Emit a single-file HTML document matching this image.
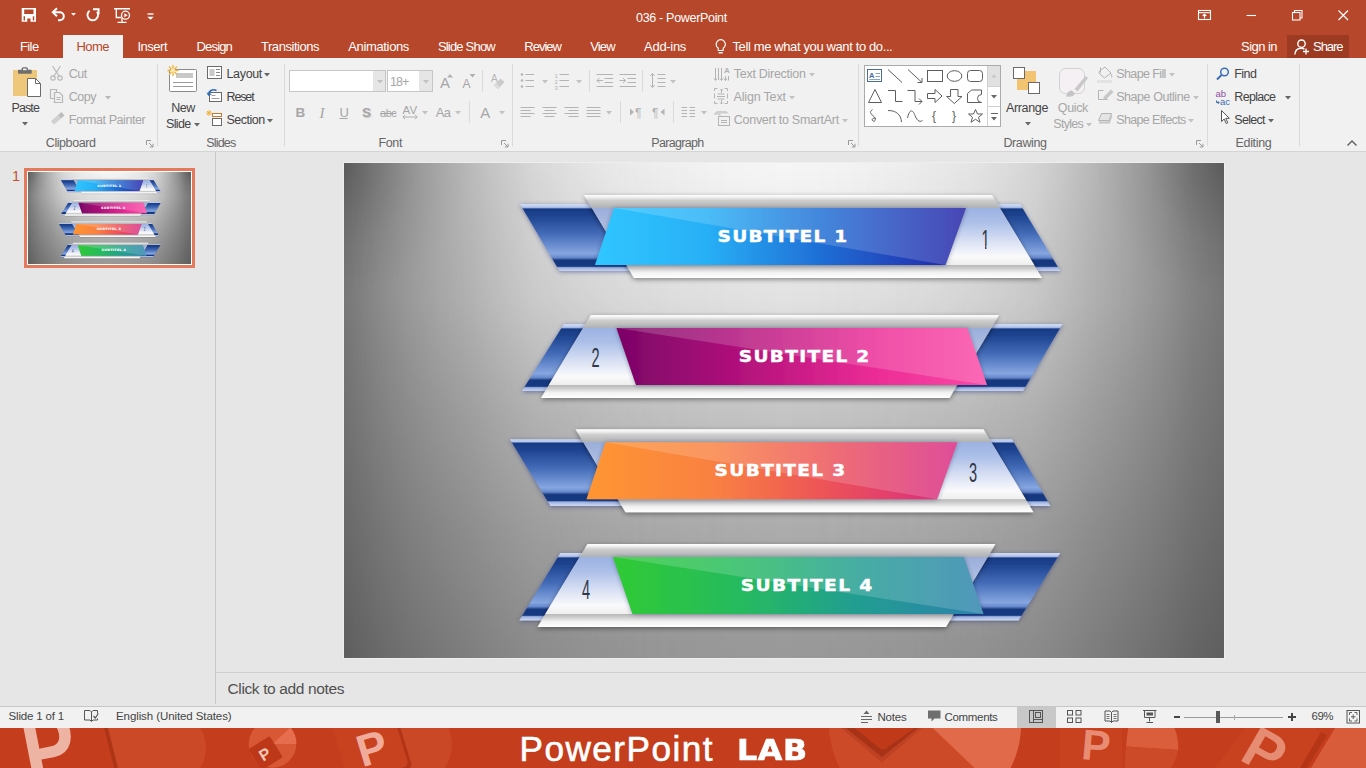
<!DOCTYPE html>
<html lang="en"><head><meta charset="utf-8"><title>036 - PowerPoint</title>
<style>

html,body{margin:0;padding:0;}
body{width:1366px;height:768px;overflow:hidden;background:#E6E6E6;font-family:"Liberation Sans",sans-serif;}
#app{position:relative;width:1366px;height:768px;overflow:hidden;}
.t{position:absolute;white-space:nowrap;line-height:1;display:block;}
.a{position:absolute;display:block;}
svg{position:absolute;overflow:visible;}

</style></head>
<body>
<div id="app">
<div class="a" style="left:0;top:0;width:1366px;height:58px;background:#B7472A"></div>
<div class="a" style="left:0;top:58px;width:1366px;height:93px;background:#F1F1F1"></div>
<div class="a" style="left:0;top:151px;width:1366px;height:1px;background:#D4D4D4"></div>
<div class="a" style="left:63px;top:35px;width:60px;height:24px;background:#F1F1F1"></div>
<div class="a" style="left:1287px;top:35px;width:62px;height:23px;background:#9C3A22"></div>
<span class="t" style="left:636.0px;top:11.7px;font-size:12.5px;color:#fff;letter-spacing:-0.31px;">036 - PowerPoint</span>
<span class="t" style="left:20.0px;top:40.0px;font-size:13px;color:#fff;letter-spacing:-0.61px;">File</span>
<span class="t" style="left:137.5px;top:40.0px;font-size:13px;color:#fff;letter-spacing:-0.50px;">Insert</span>
<span class="t" style="left:196.5px;top:40.0px;font-size:13px;color:#fff;letter-spacing:-0.83px;">Design</span>
<span class="t" style="left:261.0px;top:40.0px;font-size:13px;color:#fff;letter-spacing:-0.46px;">Transitions</span>
<span class="t" style="left:348.3px;top:40.0px;font-size:13px;color:#fff;letter-spacing:-0.36px;">Animations</span>
<span class="t" style="left:437.9px;top:40.0px;font-size:13px;color:#fff;letter-spacing:-0.80px;">Slide Show</span>
<span class="t" style="left:524.3px;top:40.0px;font-size:13px;color:#fff;letter-spacing:-0.99px;">Review</span>
<span class="t" style="left:590.2px;top:40.0px;font-size:13px;color:#fff;letter-spacing:-0.84px;">View</span>
<span class="t" style="left:644.1px;top:40.0px;font-size:13px;color:#fff;letter-spacing:-0.30px;">Add-ins</span>
<span class="t" style="left:732.5px;top:40.0px;font-size:13px;color:#fff;letter-spacing:-0.38px;">Tell me what you want to do...</span>
<span class="t" style="left:1241.0px;top:40.0px;font-size:13px;color:#fff;letter-spacing:-0.54px;">Sign in</span>
<span class="t" style="left:1313.0px;top:40.0px;font-size:13px;color:#fff;letter-spacing:-1.04px;">Share</span>
<span class="t" style="left:76.5px;top:40.0px;font-size:13px;color:#B7472A;letter-spacing:-0.54px;">Home</span>
<svg class="a" style="left:0;top:0" width="180" height="32" viewBox="0 0 180 32" fill="none" stroke="#fff" stroke-width="1.400">
<path fill-rule="evenodd" fill="#fff" stroke="none" d="M21.700 8H36V21.800H21.700ZM24.200 9.600H33.500V14.100H24.200ZM23.600 16.300H25V20.400H23.600ZM32.800 16.300H34.200V20.400H32.800ZM27.300 18.400H30.500V21.800H27.300Z"/>
<path d="M53.500 12.300h6.300a4 4 0 0 1 0 8h-1.800" stroke-width="2"/><path d="M57 8.300l-4.200 4 4.200 4" stroke-width="2"/>
<path d="M71 13l2.500 2.800 2.500-2.800z" fill="#fff" stroke="none"/>
<path d="M89.600 10.700a5.300 5.300 0 1 0 7.400 1.100" stroke-width="1.900"/><path d="M93 9.200h5.600v5.300" stroke-width="1.900"/>
<path d="M114 8.700h16M116.300 9v8.500h5" stroke-width="1.400"/><circle cx="125.500" cy="15.200" r="4" stroke-width="1.300"/><path d="M124.300 13.200v4l3.300-2z" fill="#fff" stroke="none"/><path d="M117.500 22.300h9M122 18v4.300" stroke-width="1.300"/>
<path d="M147.500 14h6" stroke-width="1.400"/><path d="M147.300 16.800l3.200 3 3.200-3z" fill="#fff" stroke="none"/>
</svg>
<svg class="a" style="left:712px;top:36px" width="18" height="20" viewBox="0 0 18 20" fill="none" stroke="#fff" stroke-width="1.200">
<path d="M6.300 14.500v-2.300a4.600 4.600 0 1 1 4.900 0v2.300z"/><path d="M6.600 16.800h4.300" stroke-width="1.300"/></svg>
<svg class="a" style="left:1292px;top:37px" width="20" height="20" viewBox="0 0 20 20" fill="none" stroke="#fff" stroke-width="1.400">
<circle cx="9.500" cy="6.700" r="3.700"/><path d="M2.800 17.500c.3-4 3-6.300 6.300-6.300 1.300 0 2.400.3 3.300.9"/><path d="M14 11.500v6M11 14.500h6" stroke-width="1.300"/></svg>
<svg class="a" style="left:1190px;top:5px" width="170" height="22" viewBox="0 0 170 22" fill="none" stroke="#fff" stroke-width="1.100">
<rect x="8.500" y="5.500" width="12" height="9"/><path d="M8.500 7.700h12" /><path d="M14.500 13.500v-4M12.700 11l1.800-1.800 1.800 1.800"/>
<path d="M56.500 10.500h9.500"/>
<rect x="102.500" y="7.500" width="7.500" height="7.500"/><path d="M104.500 7.500v-2h7.500v7.500h-2"/>
<path d="M148.500 5.500l9.500 9.500M158 5.500l-9.500 9.500" stroke-width="1.200"/>
</svg>
<div class="a" style="left:157px;top:64px;width:1px;height:82px;background:#DADADA"></div>
<div class="a" style="left:284px;top:64px;width:1px;height:82px;background:#DADADA"></div>
<div class="a" style="left:512px;top:64px;width:1px;height:82px;background:#DADADA"></div>
<div class="a" style="left:858px;top:64px;width:1px;height:82px;background:#DADADA"></div>
<div class="a" style="left:1207px;top:64px;width:1px;height:82px;background:#DADADA"></div>
<div class="a" style="left:1299px;top:64px;width:1px;height:82px;background:#DADADA"></div>
<span class="t" style="left:11.5px;top:102.2px;font-size:12.5px;color:#444;letter-spacing:-0.89px;">Paste</span>
<svg class="a" style="left:21.5px;top:122.0px" width="6" height="3.500" viewBox="0 0 6 3.500"><path d="M0 0h6l-3 3.500z" fill="#666"/></svg>
<span class="t" style="left:68.7px;top:67.7px;font-size:12.5px;color:#A6A6A6;letter-spacing:-0.48px;">Cut</span>
<span class="t" style="left:68.7px;top:91.2px;font-size:12.5px;color:#A6A6A6;letter-spacing:-0.47px;">Copy</span>
<svg class="a" style="left:105px;top:95.5px" width="6" height="3.500" viewBox="0 0 6 3.500"><path d="M0 0h6l-3 3.500z" fill="#B8B8B8"/></svg>
<span class="t" style="left:68.7px;top:114.2px;font-size:12.5px;color:#A6A6A6;letter-spacing:-0.44px;">Format Painter</span>
<span class="t" style="left:45.8px;top:137.2px;font-size:12.5px;color:#666;letter-spacing:-0.43px;">Clipboard</span>
<svg class="a" style="left:146.0px;top:140.0px" width="8" height="8" viewBox="0 0 8 8" fill="none" stroke="#999" stroke-width="1"><path d="M0.500 5v-4.500h4.500"/><path d="M3 3l4 4M7 3.800v3.200h-3.200"/></svg>
<span class="t" style="left:171.3px;top:102.2px;font-size:12.5px;color:#444;letter-spacing:-0.50px;">New</span>
<span class="t" style="left:166.0px;top:117.7px;font-size:12.5px;color:#444;letter-spacing:-0.64px;">Slide</span>
<svg class="a" style="left:193.5px;top:122.5px" width="6" height="3.500" viewBox="0 0 6 3.500"><path d="M0 0h6l-3 3.500z" fill="#666"/></svg>
<span class="t" style="left:226.5px;top:68.2px;font-size:12.5px;color:#444;letter-spacing:-0.34px;">Layout</span>
<svg class="a" style="left:264.3px;top:72.5px" width="6" height="3.500" viewBox="0 0 6 3.500"><path d="M0 0h6l-3 3.500z" fill="#666"/></svg>
<span class="t" style="left:226.5px;top:91.2px;font-size:12.5px;color:#444;letter-spacing:-1.13px;">Reset</span>
<span class="t" style="left:226.5px;top:114.2px;font-size:12.5px;color:#444;letter-spacing:-0.50px;">Section</span>
<svg class="a" style="left:267.2px;top:118.5px" width="6" height="3.500" viewBox="0 0 6 3.500"><path d="M0 0h6l-3 3.500z" fill="#666"/></svg>
<span class="t" style="left:206.2px;top:137.2px;font-size:12.5px;color:#666;letter-spacing:-0.81px;">Slides</span>
<div class="a" style="left:289px;top:70px;width:97px;height:22px;background:#fff;border:1px solid #C6C6C6;box-sizing:border-box"></div>
<div class="a" style="left:373px;top:71px;width:12px;height:20px;background:#E6E6E6"></div>
<div class="a" style="left:387px;top:70px;width:46px;height:22px;background:#fff;border:1px solid #C6C6C6;box-sizing:border-box"></div>
<div class="a" style="left:419px;top:71px;width:13px;height:20px;background:#E6E6E6"></div>
<svg class="a" style="left:376.5px;top:80.0px" width="6" height="3.500" viewBox="0 0 6 3.500"><path d="M0 0h6l-3 3.500z" fill="#C2C2C2"/></svg>
<svg class="a" style="left:422.5px;top:80.0px" width="6" height="3.500" viewBox="0 0 6 3.500"><path d="M0 0h6l-3 3.500z" fill="#C2C2C2"/></svg>
<span class="t" style="left:390.0px;top:76.2px;font-size:12.5px;color:#A6A6A6;letter-spacing:-0.90px;">18+</span>
<span class="t" style="left:440.0px;top:75.1px;font-size:15px;color:#A6A6A6;letter-spacing:-0.01px;">A</span>
<span class="t" style="left:462.5px;top:77.6px;font-size:12px;color:#A6A6A6;letter-spacing:-0.00px;">A</span>
<svg class="a" style="left:447px;top:73px" width="30" height="6" viewBox="0 0 30 6"><path d="M0 4.500l3-3.500 3 3.500zM22.500 1h6l-3 3.500z" fill="#B0B0B0"/></svg>
<div class="a" style="left:482px;top:70px;width:1px;height:22px;background:#DADADA"></div>
<svg class="a" style="left:489px;top:72px" width="18" height="18" viewBox="0 0 18 18"><text x="2" y="10" font-size="10" fill="#B5B5B5" font-family="Liberation Sans, sans-serif">A</text><path d="M5 13.500l6.500-7 4 3.500-6.500 7z" fill="#C9C9C9"/><path d="M5 13.500l2-2.200 4 3.500-2 2.200z" fill="#DCDCDC"/></svg>
<span class="t" style="left:295.4px;top:106.4px;font-size:13.5px;color:#A6A6A6;letter-spacing:-1.75px;font-weight:bold;">B</span>
<span class="t" style="left:319.5px;top:106.4px;font-size:13.5px;color:#A6A6A6;letter-spacing:0.75px;font-style:italic;font-family:'Liberation Serif',serif;font-size:15px;">I</span>
<span class="t" style="left:339.5px;top:106.3px;font-size:13px;color:#A6A6A6;letter-spacing:-1.19px;text-decoration:underline;">U</span>
<span class="t" style="left:362.0px;top:106.4px;font-size:13.5px;color:#A6A6A6;letter-spacing:-1.00px;font-weight:bold;text-shadow:1px 1px 1px #ccc;">S</span>
<span class="t" style="left:380.0px;top:107.5px;font-size:11px;color:#A6A6A6;letter-spacing:-0.45px;text-decoration:line-through;">abc</span>
<span class="t" style="left:402.4px;top:104.6px;font-size:11.5px;color:#A6A6A6;letter-spacing:0.26px;">AV</span>
<svg class="a" style="left:402px;top:114px" width="16" height="6" viewBox="0 0 16 6" fill="none" stroke="#AEAEAE" stroke-width="1"><path d="M1 3h14M3 0.800l-2.200 2.200 2.200 2.200M13 0.800l2.200 2.200-2.200 2.200"/></svg>
<svg class="a" style="left:421.5px;top:110.5px" width="6" height="3.500" viewBox="0 0 6 3.500"><path d="M0 0h6l-3 3.500z" fill="#C2C2C2"/></svg>
<span class="t" style="left:435.8px;top:106.3px;font-size:13px;color:#A6A6A6;letter-spacing:-0.70px;">Aa</span>
<svg class="a" style="left:454.5px;top:110.5px" width="6" height="3.500" viewBox="0 0 6 3.500"><path d="M0 0h6l-3 3.500z" fill="#C2C2C2"/></svg>
<div class="a" style="left:469px;top:101px;width:1px;height:22px;background:#DADADA"></div>
<span class="t" style="left:480.3px;top:105.1px;font-size:15px;color:#A6A6A6;letter-spacing:-0.01px;">A</span>
<svg class="a" style="left:498.5px;top:110.5px" width="6" height="3.500" viewBox="0 0 6 3.500"><path d="M0 0h6l-3 3.500z" fill="#C2C2C2"/></svg>
<span class="t" style="left:378.4px;top:137.2px;font-size:12.5px;color:#666;letter-spacing:-0.35px;">Font</span>
<svg class="a" style="left:501.0px;top:140.0px" width="8" height="8" viewBox="0 0 8 8" fill="none" stroke="#999" stroke-width="1"><path d="M0.500 5v-4.500h4.500"/><path d="M3 3l4 4M7 3.800v3.200h-3.200"/></svg>
<svg class="a" style="left:516px;top:66px" width="200" height="60" viewBox="516 66 200 60" fill="none" stroke="#B4B4B4" stroke-width="1">
<g fill="#B4B4B4" stroke="none"><circle cx="522" cy="74.500" r="1.300"/><circle cx="522" cy="80.500" r="1.300"/><circle cx="522" cy="86.500" r="1.300"/></g>
<path d="M525.500 74.500h8.500M525.500 80.500h8.500M525.500 86.500h8.500"/>
<path d="M559.500 74.500h9.500M559.500 80.500h9.500M559.500 86.500h9.500"/>
<path d="M596.500 74.500h16.500M604.500 78.500h8.500M604.500 82.500h8.500M596.500 86.500h16.500M597 80.500h6M599.500 78l-2.500 2.500 2.500 2.500"/>
<path d="M619.500 74.500h16.500M627.500 78.500h8.500M627.500 82.500h8.500M619.500 86.500h16.500M619.500 80.500h6M623 78l2.500 2.500-2.500 2.500"/>
<path d="M657.500 74.500h8M657.500 78.500h8M657.500 82.500h8M657.500 86.500h8M652.500 73.500v14M650.300 76l2.200-2.500 2.200 2.500M650.300 85l2.200 2.500 2.200-2.500"/>
<path d="M520.500 107.500h14M520.500 110.500h10M520.500 113.500h14M520.500 116.500h10"/>
<path d="M542.500 107.500h14M544.500 110.500h10M542.500 113.500h14M544.500 116.500h10"/>
<path d="M564.500 107.500h14M568.500 110.500h10M564.500 113.500h14M568.500 116.500h10"/>
<path d="M586.500 107.500h14M586.500 110.500h14M586.500 113.500h14M586.500 116.500h14"/>
<path d="M681.500 107.500h5.500M689.500 107.500h5.500M681.500 110.500h5.500M689.500 110.500h5.500M681.500 113.500h5.500M689.500 113.500h5.500M681.500 116.500h5.500M689.500 116.500h5.500"/>
<g fill="#B4B4B4" stroke="none"><path d="M630 108.500l4 3.500-4 3.500z"/><path d="M664.500 108.500l-4 3.500 4 3.500z"/></g>
</svg>
<span class="t" style="left:554.5px;top:72.7px;font-size:6px;color:#B4B4B4;letter-spacing:0.00px;">1</span>
<span class="t" style="left:554.5px;top:78.7px;font-size:6px;color:#B4B4B4;letter-spacing:0.00px;">2</span>
<span class="t" style="left:554.5px;top:84.7px;font-size:6px;color:#B4B4B4;letter-spacing:0.00px;">3</span>
<span class="t" style="left:635.0px;top:107.1px;font-size:12px;color:#B4B4B4;letter-spacing:0.00px;">¶</span>
<span class="t" style="left:652.0px;top:107.1px;font-size:12px;color:#B4B4B4;letter-spacing:0.00px;">¶</span>
<svg class="a" style="left:541.5px;top:80.0px" width="6" height="3.500" viewBox="0 0 6 3.500"><path d="M0 0h6l-3 3.500z" fill="#C2C2C2"/></svg>
<svg class="a" style="left:575.5px;top:80.0px" width="6" height="3.500" viewBox="0 0 6 3.500"><path d="M0 0h6l-3 3.500z" fill="#C2C2C2"/></svg>
<svg class="a" style="left:669.5px;top:80.0px" width="6" height="3.500" viewBox="0 0 6 3.500"><path d="M0 0h6l-3 3.500z" fill="#C2C2C2"/></svg>
<svg class="a" style="left:605.5px;top:110.5px" width="6" height="3.500" viewBox="0 0 6 3.500"><path d="M0 0h6l-3 3.500z" fill="#C2C2C2"/></svg>
<svg class="a" style="left:700.5px;top:110.5px" width="6" height="3.500" viewBox="0 0 6 3.500"><path d="M0 0h6l-3 3.500z" fill="#C2C2C2"/></svg>
<div class="a" style="left:589px;top:70px;width:1px;height:22px;background:#DADADA"></div>
<div class="a" style="left:642px;top:70px;width:1px;height:22px;background:#DADADA"></div>
<div class="a" style="left:620px;top:101px;width:1px;height:22px;background:#DADADA"></div>
<div class="a" style="left:673px;top:101px;width:1px;height:22px;background:#DADADA"></div>
<span class="t" style="left:651.3px;top:137.2px;font-size:12.5px;color:#666;letter-spacing:-0.67px;">Paragraph</span>
<svg class="a" style="left:847.5px;top:140.0px" width="8" height="8" viewBox="0 0 8 8" fill="none" stroke="#999" stroke-width="1"><path d="M0.500 5v-4.500h4.500"/><path d="M3 3l4 4M7 3.800v3.200h-3.200"/></svg>
<svg class="a" style="left:712px;top:64px" width="20" height="64" viewBox="712 64 20 64" fill="none" stroke="#B4B4B4" stroke-width="1">
<path d="M715.500 68v12M718.500 68v12M721.500 68v12M714 78.500l1.500 2 1.500-2M720 78.500l1.500 2 1.500-2M725.500 76v4.500M724 78.500l1.500 2 1.500-2M728.500 76v4.500"/>
<path d="M714.500 91v-2.500h3M727.500 91v-2.500h-3M714.500 101v2.500h3M727.500 101v2.500h-3M714.500 93.500v5M727.500 93.500v5M717 96.500h8M717.500 94h7M717.500 99h7M721.500 89v4M720 90.500l1.500-1.500 1.500 1.500M721.500 100v4M720 102.500l1.500 1.500 1.500-1.500"/>
<path d="M714 113.500l3-2.500h9l3 2.500z" fill="#CFCFCF" stroke="none"/><path d="M714 114h6v3" stroke="#C0C0C0"/>
<rect x="718.500" y="116.500" width="11" height="9" fill="#F1F1F1"/><path d="M721 120.500h6M721 122.500h6"/>
</svg>
<span class="t" style="left:724.0px;top:66.5px;font-size:8px;color:#B4B4B4;letter-spacing:0.00px;font-weight:bold;">A</span>
<span class="t" style="left:733.8px;top:67.9px;font-size:12.5px;color:#A6A6A6;letter-spacing:-0.28px;">Text Direction</span>
<svg class="a" style="left:808.5px;top:72.5px" width="6" height="3.500" viewBox="0 0 6 3.500"><path d="M0 0h6l-3 3.500z" fill="#C2C2C2"/></svg>
<span class="t" style="left:733.5px;top:90.9px;font-size:12.5px;color:#A6A6A6;letter-spacing:-0.17px;">Align Text</span>
<svg class="a" style="left:788.7px;top:95.5px" width="6" height="3.500" viewBox="0 0 6 3.500"><path d="M0 0h6l-3 3.500z" fill="#C2C2C2"/></svg>
<span class="t" style="left:733.8px;top:113.9px;font-size:12.5px;color:#A6A6A6;letter-spacing:-0.28px;">Convert to SmartArt</span>
<svg class="a" style="left:841.7px;top:118.5px" width="6" height="3.500" viewBox="0 0 6 3.500"><path d="M0 0h6l-3 3.500z" fill="#C2C2C2"/></svg>
<div class="a" style="left:864px;top:65px;width:137px;height:62px;background:#fff;border:1px solid #ABABAB;box-sizing:border-box"></div>
<div class="a" style="left:987px;top:66px;width:13px;height:60px;background:#fff;border-left:1px solid #D0D0D0;box-sizing:border-box"></div>
<div class="a" style="left:988px;top:66px;width:12px;height:20px;background:#E1E1E1"></div>
<div class="a" style="left:988px;top:86px;width:12px;height:1px;background:#D0D0D0"></div><div class="a" style="left:988px;top:106px;width:12px;height:1px;background:#D0D0D0"></div>
<svg class="a" style="left:990.8px;top:95.0px" width="6" height="3.500" viewBox="0 0 6 3.500"><path d="M0 0h6l-3 3.500z" fill="#666"/></svg>
<svg class="a" style="left:990.8px;top:116.5px" width="6" height="3.500" viewBox="0 0 6 3.500"><path d="M0 0h6l-3 3.500z" fill="#666"/></svg>
<svg class="a" style="left:990px;top:74px" width="8" height="4" viewBox="0 0 8 4"><path d="M1 3.500l3-3 3 3z" fill="#C6C6C6"/></svg>
<div class="a" style="left:990.500px;top:113px;width:7px;height:1px;background:#666"></div>
<svg class="a" style="left:865px;top:66px" width="122" height="60" viewBox="865 66 122 60" fill="none" stroke="#5E5E5E" stroke-width="1">
<rect x="867.500" y="69.500" width="14" height="12" stroke="#4A6C9C"/><path d="M875.500 73.500h4.500M875.500 76.500h4.500M869.500 79.500h10.500" stroke="#8CA2C4"/><text x="869" y="77.500" font-size="7.500" font-weight="bold" fill="#4A6C9C" stroke="none" font-family="Liberation Sans, sans-serif">A</text>
<path d="M888 69.500l14 13"/><path d="M908 69.500l14 13M922 78v4.500h-4.500"/>
<rect x="927.500" y="70.500" width="15" height="11"/><ellipse cx="954.500" cy="76" rx="7.300" ry="5.300"/><rect x="967.500" y="70.500" width="15" height="11" rx="3"/>
<path d="M875 89.500l-6.500 13h13z"/><path d="M888 90.500h7.500v11h7"/><path d="M907.500 90.500h7.500v11h7M919 98.500l3 3-3 3"/>
<path d="M927.500 93.500h7.500v-4l7 6.500-7 6.500v-4h-7.500z"/><path d="M950.500 89.500h7.500v7h4l-7.700 7-7.700-7h4z"/>
<path d="M967.500 102.500v-9l4-3.500h10v4.500a4 4 0 0 0 0 8z"/>
<path d="M872.500 109.500c-4 3-1 5 1.500 7s1 6-1 4.500 0-3.500 2.500-2.500"/><path d="M888 110.500c8 0 13 4 13.500 11.500"/><path d="M907.500 118c2-9 5-9 7.500-2.500s5.500 6.500 7.500 5"/>
<path d="M975.500 109.500l2 4.500h5l-4 3.300 1.500 5-4.500-3-4.500 3 1.500-5-4-3.300h5z"/>
</svg>
<span class="t" style="left:932.0px;top:110.1px;font-size:12px;color:#5E5E5E;letter-spacing:0.00px;">{</span>
<span class="t" style="left:952.0px;top:110.1px;font-size:12px;color:#5E5E5E;letter-spacing:0.00px;">}</span>
<svg class="a" style="left:1010px;top:65px" width="34" height="32" viewBox="1010 65 34 32" fill="none">
<rect x="1017" y="71" width="19" height="19" fill="#F2C472"/><rect x="1013.500" y="67.500" width="11" height="11" fill="#fff" stroke="#6A6A6A"/><rect x="1028.500" y="82.500" width="11" height="11" fill="#fff" stroke="#6A6A6A"/></svg>
<span class="t" style="left:1006.0px;top:101.7px;font-size:12.5px;color:#444;letter-spacing:-0.35px;">Arrange</span>
<svg class="a" style="left:1024.5px;top:122.0px" width="6" height="3.500" viewBox="0 0 6 3.500"><path d="M0 0h6l-3 3.500z" fill="#666"/></svg>
<svg class="a" style="left:1056px;top:66px" width="34" height="32" viewBox="1056 66 34 32" fill="none">
<rect x="1059.500" y="68.500" width="25" height="25" rx="6" fill="#F4F0F4" stroke="#D2D2D2"/><path d="M1066 96.500c1-4 3-6.500 6-6l3 3c-1 3-5 3.500-9 3z" fill="#C4C4C4"/><path d="M1074.500 89l11-13 2.500 2-10.500 13.500z" fill="#C8C8C8"/></svg>
<span class="t" style="left:1057.8px;top:101.7px;font-size:12.5px;color:#A6A6A6;letter-spacing:-0.35px;">Quick</span>
<span class="t" style="left:1053.3px;top:117.7px;font-size:12.5px;color:#A6A6A6;letter-spacing:-0.72px;">Styles</span>
<svg class="a" style="left:1086px;top:122.5px" width="6" height="3.500" viewBox="0 0 6 3.500"><path d="M0 0h6l-3 3.500z" fill="#C2C2C2"/></svg>
<svg class="a" style="left:1095px;top:64px" width="20" height="64" viewBox="1095 64 20 64" fill="none" stroke="#B4B4B4" stroke-width="1">
<path d="M1100.500 67.500v5M1099.500 71l5.500-4 6 6-6.500 5-5.500-5z"/><path d="M1111 74c1.200 1.800 1.200 3 0 3.500" /><rect x="1097" y="80" width="15" height="3" fill="#E2E2E2" stroke="none"/>
<path d="M1098.500 90.500v9h9"/><path d="M1098.500 90.500h5"/><path d="M1103 100l1-3.500 7-7 2.500 2.500-7 7z" fill="#C8C8C8" stroke="none"/>
<path d="M1098.500 120.500l3-7h10l-2.500 7z" fill="#E4E4E4"/><path d="M1099 122.500h10l2.500-7" stroke="#C4C4C4" stroke-width="2"/>
</svg>
<span class="t" style="left:1116.2px;top:68.2px;font-size:12.5px;color:#A6A6A6;letter-spacing:-0.60px;">Shape Fill</span>
<svg class="a" style="left:1168.5px;top:72.5px" width="6" height="3.500" viewBox="0 0 6 3.500"><path d="M0 0h6l-3 3.500z" fill="#C2C2C2"/></svg>
<span class="t" style="left:1116.2px;top:91.2px;font-size:12.5px;color:#A6A6A6;letter-spacing:-0.44px;">Shape Outline</span>
<svg class="a" style="left:1192.5px;top:95.5px" width="6" height="3.500" viewBox="0 0 6 3.500"><path d="M0 0h6l-3 3.500z" fill="#C2C2C2"/></svg>
<span class="t" style="left:1116.2px;top:114.2px;font-size:12.5px;color:#A6A6A6;letter-spacing:-0.63px;">Shape Effects</span>
<svg class="a" style="left:1188.3px;top:118.5px" width="6" height="3.500" viewBox="0 0 6 3.500"><path d="M0 0h6l-3 3.500z" fill="#C2C2C2"/></svg>
<span class="t" style="left:1003.5px;top:137.2px;font-size:12.5px;color:#666;letter-spacing:-0.41px;">Drawing</span>
<svg class="a" style="left:1196.0px;top:140.0px" width="8" height="8" viewBox="0 0 8 8" fill="none" stroke="#999" stroke-width="1"><path d="M0.500 5v-4.500h4.500"/><path d="M3 3l4 4M7 3.800v3.200h-3.200"/></svg>
<svg class="a" style="left:1214px;top:64px" width="18" height="64" viewBox="1214 64 18 64" fill="none">
<circle cx="1224.500" cy="72" r="3.800" stroke="#3B6FB4" stroke-width="1.500"/><path d="M1221.500 75l-4.500 4.500" stroke="#3B6FB4" stroke-width="2"/>
<path d="M1221.500 110.500v11l2.700-2.500 2 4.500 1.600-.7-2-4.500h3.500z" fill="#fff" stroke="#555" stroke-width="1"/>
<path d="M1216.500 100.500v2h2.500M1217.800 101.200l1.400 1.400-1.400 1.400" stroke="#3B6FB4" stroke-width="1"/>
</svg>
<span class="t" style="left:1215.5px;top:88.8px;font-size:9.5px;color:#8A4FA0;letter-spacing:0.00px;">ab</span>
<span class="t" style="left:1220.0px;top:97.3px;font-size:9.5px;color:#3B6FB4;letter-spacing:0.00px;">ac</span>
<span class="t" style="left:1234.3px;top:68.2px;font-size:12.5px;color:#444;letter-spacing:-0.58px;">Find</span>
<span class="t" style="left:1234.3px;top:91.2px;font-size:12.5px;color:#444;letter-spacing:-0.69px;">Replace</span>
<svg class="a" style="left:1284.5px;top:95.5px" width="6" height="3.500" viewBox="0 0 6 3.500"><path d="M0 0h6l-3 3.500z" fill="#666"/></svg>
<span class="t" style="left:1234.3px;top:114.2px;font-size:12.5px;color:#444;letter-spacing:-0.71px;">Select</span>
<svg class="a" style="left:1267.5px;top:118.5px" width="6" height="3.500" viewBox="0 0 6 3.500"><path d="M0 0h6l-3 3.500z" fill="#666"/></svg>
<span class="t" style="left:1235.5px;top:137.2px;font-size:12.5px;color:#666;letter-spacing:-0.32px;">Editing</span>
<svg class="a" style="left:1346px;top:139px" width="12" height="8" viewBox="0 0 12 8" fill="none" stroke="#666" stroke-width="1.500"><path d="M1.500 6.500l4.500-4.500 4.500 4.500"/></svg>
<svg class="a" style="left:8px;top:62px" width="36" height="40" viewBox="8 62 36 40" fill="none">
<rect x="13" y="70" width="24" height="26" fill="#EFC77B"/><rect x="18" y="69.800" width="13.700" height="4" rx="0.800" fill="#6E6E6E"/><rect x="22.300" y="67.900" width="5" height="3" rx="1" fill="#F1F1F1" stroke="#6E6E6E" stroke-width="1.400"/>
<path d="M27.500 78.500h8l5 5v13h-13z" fill="#fff" stroke="#6A6A6A"/><path d="M35.500 78.500v5h5" stroke="#6A6A6A"/></svg>
<svg class="a" style="left:48px;top:62px" width="20" height="66" viewBox="48 62 20 66" fill="none" stroke="#B8B8B8" stroke-width="1.200">
<path d="M52.500 66l6.500 10M60.500 66l-6.500 10"/><circle cx="53" cy="78" r="2.200"/><circle cx="60" cy="78" r="2.200"/>
<path d="M50.500 89.500h6v9h-6z"/><path d="M54.500 92.500h5l3 3v7h-8z" fill="#F1F1F1"/><path d="M56.500 97.500h4M56.500 99.500h4" stroke-width="1"/>
<path d="M51 121l7-6 3 3.500-7 6z" fill="#D0D0D0" stroke="none"/><path d="M58 115l3.500-3 3 3.500-3.500 3z" fill="#BDBDBD" stroke="none"/>
</svg>
<svg class="a" style="left:165px;top:62px" width="36" height="34" viewBox="165 62 36 34" fill="none">
<rect x="169.500" y="69.500" width="27" height="22" rx="1" fill="#fff" stroke="#8A8A8A"/><rect x="176" y="73" width="17" height="5" fill="#C8C8C8"/><path d="M173 82.500h20M173 86.500h20" stroke="#9A9A9A"/>
<path d="M173 65v11M167.500 70.500h11M169 66.500l8 8M177 66.500l-8 8" stroke="#F0B43C" stroke-width="1.400"/><circle cx="173" cy="70.500" r="2.200" fill="#FBE6B0"/></svg>
<svg class="a" style="left:205px;top:64px" width="20" height="64" viewBox="205 64 20 64" fill="none" stroke="#6A6A6A" stroke-width="1">
<rect x="207.500" y="66.500" width="14" height="12" fill="#fff"/><rect x="209.500" y="69" width="5" height="7" fill="#C8C8C8" stroke="none"/><path d="M216 69.500h4M216 72.500h4M216 75.500h4" stroke="#8A8A8A"/>
<rect x="209.500" y="92.500" width="12" height="9" fill="#fff"/><path d="M211.500 95.500h4M211.500 98.500h8" stroke="#A0A0A0"/><path d="M208.500 95c0-4 4-6.500 8-4.500" stroke="#2F6DB5" stroke-width="1.600"/><path d="M206.500 92.500l2 3.500 3.500-2z" fill="#2F6DB5" stroke="none"/>
<rect x="212.500" y="113.500" width="9" height="3" fill="#fff" stroke="#C8782A"/><rect x="212.500" y="118.500" width="9" height="7" fill="#fff"/>
<path d="M209 110v6M206 113h6M207 111l4 4M211 111l-4 4" stroke="#F0B43C"/></svg>
<div class="a" style="left:215px;top:152px;width:1px;height:552px;background:#C8C8C8"></div>
<div class="a" style="left:216px;top:672px;width:1150px;height:1px;background:#CFCFCF"></div>
<span class="t" style="left:227.5px;top:680.9px;font-size:15.5px;color:#505050;letter-spacing:-0.37px;">Click to add notes</span>
<span class="t" style="left:12.0px;top:168.5px;font-size:14.5px;color:#C4502E;letter-spacing:0.00px;">1</span>
<div class="a" style="left:24px;top:168px;width:171px;height:100px;background:#E5795B"></div>
<div class="a" style="left:27px;top:171px;width:165px;height:94px;background:#fff"></div>
<div class="a" style="left:343px;top:162px;width:882px;height:497px;background:#EEEEEE"></div>
<svg class="a" style="left:344px;top:163px" width="880" height="495" viewBox="344 163 880 495"><style>.st{font-family:"DejaVu Sans","Liberation Sans",sans-serif;font-weight:bold;font-size:16.3px;fill:#fff;stroke:#fff;stroke-width:0.45px}.nm{font-family:"Liberation Sans",sans-serif;font-size:28px;fill:#2F3848}</style><defs><linearGradient id="gBg" gradientUnits="userSpaceOnUse" x1="0" y1="163" x2="0" y2="658"><stop offset="0" stop-color="#F6F6F6"/><stop offset="0.275" stop-color="#E2E2E2"/><stop offset="0.51" stop-color="#C4C4C4"/><stop offset="0.745" stop-color="#ACACAC"/><stop offset="0.97" stop-color="#9A9A9A"/><stop offset="1" stop-color="#999999"/></linearGradient><linearGradient id="gBgE" gradientUnits="userSpaceOnUse" x1="0" y1="163" x2="0" y2="658"><stop offset="0" stop-color="#707070"/><stop offset="0.275" stop-color="#767676"/><stop offset="0.51" stop-color="#707070"/><stop offset="0.745" stop-color="#686868"/><stop offset="1" stop-color="#5E5E5E"/></linearGradient><linearGradient id="gBgM" gradientUnits="userSpaceOnUse" x1="344" y1="0" x2="1224" y2="0"><stop offset="0.0000" stop-color="#fff" stop-opacity="1.000"/><stop offset="0.0357" stop-color="#fff" stop-opacity="0.832"/><stop offset="0.0714" stop-color="#fff" stop-opacity="0.685"/><stop offset="0.1071" stop-color="#fff" stop-opacity="0.562"/><stop offset="0.1429" stop-color="#fff" stop-opacity="0.452"/><stop offset="0.1786" stop-color="#fff" stop-opacity="0.334"/><stop offset="0.2143" stop-color="#fff" stop-opacity="0.231"/><stop offset="0.2500" stop-color="#fff" stop-opacity="0.170"/><stop offset="0.2857" stop-color="#fff" stop-opacity="0.119"/><stop offset="0.3214" stop-color="#fff" stop-opacity="0.082"/><stop offset="0.3571" stop-color="#fff" stop-opacity="0.055"/><stop offset="0.3929" stop-color="#fff" stop-opacity="0.036"/><stop offset="0.4286" stop-color="#fff" stop-opacity="0.019"/><stop offset="0.4643" stop-color="#fff" stop-opacity="0.007"/><stop offset="0.5000" stop-color="#fff" stop-opacity="0.000"/><stop offset="0.5357" stop-color="#fff" stop-opacity="0.008"/><stop offset="0.5714" stop-color="#fff" stop-opacity="0.022"/><stop offset="0.6071" stop-color="#fff" stop-opacity="0.041"/><stop offset="0.6429" stop-color="#fff" stop-opacity="0.062"/><stop offset="0.6786" stop-color="#fff" stop-opacity="0.092"/><stop offset="0.7143" stop-color="#fff" stop-opacity="0.131"/><stop offset="0.7500" stop-color="#fff" stop-opacity="0.186"/><stop offset="0.7857" stop-color="#fff" stop-opacity="0.251"/><stop offset="0.8214" stop-color="#fff" stop-opacity="0.361"/><stop offset="0.8571" stop-color="#fff" stop-opacity="0.485"/><stop offset="0.8929" stop-color="#fff" stop-opacity="0.602"/><stop offset="0.9286" stop-color="#fff" stop-opacity="0.732"/><stop offset="0.9643" stop-color="#fff" stop-opacity="0.887"/><stop offset="1.0000" stop-color="#fff" stop-opacity="1.000"/></linearGradient><mask id="mBg" maskUnits="userSpaceOnUse" x="344" y="163" width="880" height="495" style="mask-type:alpha"><rect x="344" y="163" width="880" height="495" fill="url(#gBgM)"/></mask><linearGradient id="gRib1" gradientUnits="userSpaceOnUse" x1="0" y1="204" x2="0" y2="271"><stop offset="0" stop-color="#D2DCF4"/><stop offset="0.05" stop-color="#B4C4EC"/><stop offset="0.075" stop-color="#183A84"/>
<stop offset="0.16" stop-color="#1C428E"/><stop offset="0.45" stop-color="#446CB8"/><stop offset="0.74" stop-color="#86A6E0"/>
<stop offset="0.80" stop-color="#6688CC"/><stop offset="0.84" stop-color="#19387E"/><stop offset="0.93" stop-color="#183A82"/>
<stop offset="0.95" stop-color="#9DB1E2"/><stop offset="1" stop-color="#C8D4F0"/></linearGradient><linearGradient id="gRib2" gradientUnits="userSpaceOnUse" x1="0" y1="324" x2="0" y2="391"><stop offset="0" stop-color="#D2DCF4"/><stop offset="0.05" stop-color="#B4C4EC"/><stop offset="0.075" stop-color="#183A84"/>
<stop offset="0.16" stop-color="#1C428E"/><stop offset="0.45" stop-color="#446CB8"/><stop offset="0.74" stop-color="#86A6E0"/>
<stop offset="0.80" stop-color="#6688CC"/><stop offset="0.84" stop-color="#19387E"/><stop offset="0.93" stop-color="#183A82"/>
<stop offset="0.95" stop-color="#9DB1E2"/><stop offset="1" stop-color="#C8D4F0"/></linearGradient><linearGradient id="gPl1" gradientUnits="userSpaceOnUse" x1="0" y1="195" x2="0" y2="278"><stop offset="0" stop-color="#FFFFFF"/><stop offset="0.03" stop-color="#EEEEEE"/><stop offset="0.065" stop-color="#CECECE"/>
<stop offset="0.155" stop-color="#B0B1B4"/><stop offset="0.50" stop-color="#D0D0D0"/><stop offset="0.845" stop-color="#B8B8B8"/>
<stop offset="0.89" stop-color="#D2D2D2"/><stop offset="0.935" stop-color="#F2F2F2"/><stop offset="1" stop-color="#FFFFFF"/></linearGradient><linearGradient id="gPl2" gradientUnits="userSpaceOnUse" x1="0" y1="315" x2="0" y2="398"><stop offset="0" stop-color="#FFFFFF"/><stop offset="0.03" stop-color="#EEEEEE"/><stop offset="0.065" stop-color="#CECECE"/>
<stop offset="0.155" stop-color="#B0B1B4"/><stop offset="0.50" stop-color="#D0D0D0"/><stop offset="0.845" stop-color="#B8B8B8"/>
<stop offset="0.89" stop-color="#D2D2D2"/><stop offset="0.935" stop-color="#F2F2F2"/><stop offset="1" stop-color="#FFFFFF"/></linearGradient><linearGradient id="gTab1" gradientUnits="userSpaceOnUse" x1="0" y1="208" x2="0" y2="265"><stop offset="0" stop-color="#9CB2E3"/><stop offset="0.25" stop-color="#ACBFE8"/><stop offset="0.6" stop-color="#DBE2F4"/>
<stop offset="0.85" stop-color="#FAFAFC"/><stop offset="1" stop-color="#EEEEEE"/></linearGradient><linearGradient id="gTab2" gradientUnits="userSpaceOnUse" x1="0" y1="328" x2="0" y2="385"><stop offset="0" stop-color="#9CB2E3"/><stop offset="0.25" stop-color="#ACBFE8"/><stop offset="0.6" stop-color="#DBE2F4"/>
<stop offset="0.85" stop-color="#FAFAFC"/><stop offset="1" stop-color="#EEEEEE"/></linearGradient><linearGradient id="gWed1" gradientUnits="userSpaceOnUse" x1="0" y1="208" x2="0" y2="232"><stop offset="0" stop-color="#9AAEDA"/><stop offset="1" stop-color="#B4C2E4"/></linearGradient><linearGradient id="gWed2" gradientUnits="userSpaceOnUse" x1="0" y1="328" x2="0" y2="353"><stop offset="0" stop-color="#9AAEDA"/><stop offset="1" stop-color="#B4C2E4"/></linearGradient><linearGradient id="gB1" x1="0" y1="0" x2="1" y2="0"><stop offset="0" stop-color="#30C6FF"/><stop offset="0.3" stop-color="#28B0F6"/><stop offset="0.6" stop-color="#1F70D6"/><stop offset="1" stop-color="#2222A6"/></linearGradient><linearGradient id="gB2" x1="0" y1="0" x2="1" y2="0"><stop offset="0" stop-color="#7A0466"/><stop offset="0.35" stop-color="#B4127C"/><stop offset="0.7" stop-color="#EC2C96"/><stop offset="1" stop-color="#FB4AA6"/></linearGradient><linearGradient id="gB3" x1="0" y1="0" x2="1" y2="0"><stop offset="0" stop-color="#FF9632"/><stop offset="0.35" stop-color="#F98042"/><stop offset="0.65" stop-color="#EC5258"/><stop offset="1" stop-color="#D82A84"/></linearGradient><linearGradient id="gB4" x1="0" y1="0" x2="1" y2="0"><stop offset="0" stop-color="#30CA34"/><stop offset="0.35" stop-color="#26BA60"/><stop offset="0.65" stop-color="#229E90"/><stop offset="1" stop-color="#2E82AE"/></linearGradient><filter id="fRib" x="-5%" y="-20%" width="110%" height="150%"><feDropShadow dx="0" dy="1" stdDeviation="2.2" flood-color="#28387A" flood-opacity="0.55"/></filter><filter id="fPl" x="-5%" y="-20%" width="110%" height="150%"><feDropShadow dx="0" dy="1.5" stdDeviation="2.5" flood-color="#000" flood-opacity="0.42"/></filter><filter id="fBar" x="-5%" y="-20%" width="110%" height="150%"><feDropShadow dx="0" dy="0.5" stdDeviation="2" flood-color="#20305A" flood-opacity="0.45"/></filter><radialGradient id="gCor" gradientUnits="userSpaceOnUse" cx="0" cy="0" r="130"><stop offset="0" stop-color="#000" stop-opacity="0.19"/><stop offset="0.3" stop-color="#000" stop-opacity="0.11"/><stop offset="0.6" stop-color="#000" stop-opacity="0.04"/><stop offset="1" stop-color="#000" stop-opacity="0"/></radialGradient><clipPath id="cOne" clipPathUnits="userSpaceOnUse"><path d="M-10-30H10V-2.150H1.800V1H-0.800V-2.150H-10Z"/></clipPath></defs><g id="slideC"><rect x="344" y="163" width="880" height="495" fill="url(#gBg)"/><rect x="344" y="163" width="880" height="495" fill="url(#gBgE)" mask="url(#mBg)"/><g transform="translate(344 163)"><rect x="0" y="0" width="130" height="130" fill="url(#gCor)"/></g><g transform="translate(1224 163)"><rect x="-130" y="0" width="130" height="130" fill="url(#gCor)"/></g><g transform="translate(0,0)"><polygon points="520.0,204.0 1020.0,204.0 1060.3,271.0 559.5,271.0" fill="url(#gRib1)" filter="url(#fRib)"/><polygon points="584.0,195.0 992.0,195.0 1042.0,278.0 634.0,278.0" fill="url(#gPl1)" filter="url(#fPl)"/><polygon points="966.0,208.0 999.8,208.0 1034.2,265.0 945.5,265.0" fill="url(#gTab1)"/><polygon points="592,208 614,208 606,231.600" fill="url(#gWed1)"/><polygon points="614.0,208.0 966.0,208.0 945.5,265.0 595.0,265.0" fill="url(#gB1)" filter="url(#fBar)"/><polygon points="614.0,208.0 966.0,208.0 945.5,265.0" fill="#fff" fill-opacity="0.17"/></g><text transform="translate(717.6,241.8) scale(1.14,1)" textLength="113.6" lengthAdjust="spacing" class="st">SUBTITEL 1</text><text transform="translate(985.5,248.5) scale(0.52,1)" class="nm" text-anchor="middle" clip-path="url(#cOne)">1</text><g transform="translate(0,0)"><polygon points="564.0,324.0 1062.5,324.0 1023.0,391.0 522.0,391.0" fill="url(#gRib2)" filter="url(#fRib)"/><polygon points="591.0,315.0 999.0,315.0 949.5,398.0 541.0,398.0" fill="url(#gPl2)" filter="url(#fPl)"/><polygon points="583.2,328.0 616.4,328.0 636.0,385.0 548.8,385.0" fill="url(#gTab2)"/><polygon points="967.400,328 991.200,328 976,353.100" fill="url(#gWed2)"/><polygon points="616.4,328.0 967.4,328.0 987.0,385.0 636.0,385.0" fill="url(#gB2)" filter="url(#fBar)"/><polygon points="616.4,328.0 967.4,328.0 987.0,385.0" fill="#fff" fill-opacity="0.17"/></g><text transform="translate(738.7,362) scale(1.14,1)" textLength="114.5" lengthAdjust="spacing" class="st">SUBTITEL 2</text><text transform="translate(595.5,367) scale(0.52,1)" class="nm" text-anchor="middle">2</text><g transform="translate(-8.5,234.3)"><polygon points="518.4,204.9 1020.5,204.9 1058.9,271.7 559.0,271.7" fill="url(#gRib1)" filter="url(#fRib)"/><polygon points="584.0,195.0 992.0,195.0 1042.0,278.0 634.0,278.0" fill="url(#gPl1)" filter="url(#fPl)"/><polygon points="966.0,208.0 999.8,208.0 1034.2,265.0 945.5,265.0" fill="url(#gTab1)"/><polygon points="592,208 614,208 606,231.600" fill="url(#gWed1)"/><polygon points="614.0,208.0 966.0,208.0 945.5,265.0 595.0,265.0" fill="url(#gB3)" filter="url(#fBar)"/><polygon points="614.0,208.0 966.0,208.0 945.5,265.0" fill="#fff" fill-opacity="0.17"/></g><text transform="translate(714.6,475.8) scale(1.14,1)" textLength="114.5" lengthAdjust="spacing" class="st">SUBTITEL 3</text><text transform="translate(973,482) scale(0.52,1)" class="nm" text-anchor="middle">3</text><g transform="translate(-3.5,229)"><polygon points="563.9,324.0 1063.8,324.0 1022.0,391.5 522.8,391.5" fill="url(#gRib2)" filter="url(#fRib)"/><polygon points="591.0,315.0 999.0,315.0 949.5,398.0 541.0,398.0" fill="url(#gPl2)" filter="url(#fPl)"/><polygon points="583.2,328.0 616.4,328.0 636.0,385.0 548.8,385.0" fill="url(#gTab2)"/><polygon points="967.400,328 991.200,328 976,353.100" fill="url(#gWed2)"/><polygon points="616.4,328.0 967.4,328.0 987.0,385.0 636.0,385.0" fill="url(#gB4)" filter="url(#fBar)"/><polygon points="616.4,328.0 967.4,328.0 987.0,385.0" fill="#fff" fill-opacity="0.17"/></g><text transform="translate(740.7,590.5) scale(1.14,1)" textLength="115.4" lengthAdjust="spacing" class="st">SUBTITEL 4</text><text transform="translate(586,599) scale(0.52,1)" class="nm" text-anchor="middle">4</text></g></svg>
<svg class="a" style="left:28px;top:172px;overflow:hidden" width="163" height="92" viewBox="344 163 880 495" preserveAspectRatio="none"><rect x="344" y="163" width="880" height="495" fill="url(#gBg)"/><rect x="344" y="163" width="880" height="495" fill="url(#gBgE)" mask="url(#mBg)"/><g transform="translate(344 163)"><rect x="0" y="0" width="130" height="130" fill="url(#gCor)"/></g><g transform="translate(1224 163)"><rect x="-130" y="0" width="130" height="130" fill="url(#gCor)"/></g><g transform="translate(0,0)"><polygon points="520.0,204.0 1020.0,204.0 1060.3,271.0 559.5,271.0" fill="url(#gRib1)" filter="url(#fRib)"/><polygon points="584.0,195.0 992.0,195.0 1042.0,278.0 634.0,278.0" fill="url(#gPl1)" filter="url(#fPl)"/><polygon points="966.0,208.0 999.8,208.0 1034.2,265.0 945.5,265.0" fill="url(#gTab1)"/><polygon points="592,208 614,208 606,231.600" fill="url(#gWed1)"/><polygon points="614.0,208.0 966.0,208.0 945.5,265.0 595.0,265.0" fill="url(#gB1)" filter="url(#fBar)"/><polygon points="614.0,208.0 966.0,208.0 945.5,265.0" fill="#fff" fill-opacity="0.17"/></g><text transform="translate(717.6,241.8) scale(1.14,1)" textLength="113.6" lengthAdjust="spacing" class="st">SUBTITEL 1</text><text transform="translate(985.5,248.5) scale(0.52,1)" class="nm" text-anchor="middle" clip-path="url(#cOne)">1</text><g transform="translate(0,0)"><polygon points="564.0,324.0 1062.5,324.0 1023.0,391.0 522.0,391.0" fill="url(#gRib2)" filter="url(#fRib)"/><polygon points="591.0,315.0 999.0,315.0 949.5,398.0 541.0,398.0" fill="url(#gPl2)" filter="url(#fPl)"/><polygon points="583.2,328.0 616.4,328.0 636.0,385.0 548.8,385.0" fill="url(#gTab2)"/><polygon points="967.400,328 991.200,328 976,353.100" fill="url(#gWed2)"/><polygon points="616.4,328.0 967.4,328.0 987.0,385.0 636.0,385.0" fill="url(#gB2)" filter="url(#fBar)"/><polygon points="616.4,328.0 967.4,328.0 987.0,385.0" fill="#fff" fill-opacity="0.17"/></g><text transform="translate(738.7,362) scale(1.14,1)" textLength="114.5" lengthAdjust="spacing" class="st">SUBTITEL 2</text><text transform="translate(595.5,367) scale(0.52,1)" class="nm" text-anchor="middle">2</text><g transform="translate(-8.5,234.3)"><polygon points="518.4,204.9 1020.5,204.9 1058.9,271.7 559.0,271.7" fill="url(#gRib1)" filter="url(#fRib)"/><polygon points="584.0,195.0 992.0,195.0 1042.0,278.0 634.0,278.0" fill="url(#gPl1)" filter="url(#fPl)"/><polygon points="966.0,208.0 999.8,208.0 1034.2,265.0 945.5,265.0" fill="url(#gTab1)"/><polygon points="592,208 614,208 606,231.600" fill="url(#gWed1)"/><polygon points="614.0,208.0 966.0,208.0 945.5,265.0 595.0,265.0" fill="url(#gB3)" filter="url(#fBar)"/><polygon points="614.0,208.0 966.0,208.0 945.5,265.0" fill="#fff" fill-opacity="0.17"/></g><text transform="translate(714.6,475.8) scale(1.14,1)" textLength="114.5" lengthAdjust="spacing" class="st">SUBTITEL 3</text><text transform="translate(973,482) scale(0.52,1)" class="nm" text-anchor="middle">3</text><g transform="translate(-3.5,229)"><polygon points="563.9,324.0 1063.8,324.0 1022.0,391.5 522.8,391.5" fill="url(#gRib2)" filter="url(#fRib)"/><polygon points="591.0,315.0 999.0,315.0 949.5,398.0 541.0,398.0" fill="url(#gPl2)" filter="url(#fPl)"/><polygon points="583.2,328.0 616.4,328.0 636.0,385.0 548.8,385.0" fill="url(#gTab2)"/><polygon points="967.400,328 991.200,328 976,353.100" fill="url(#gWed2)"/><polygon points="616.4,328.0 967.4,328.0 987.0,385.0 636.0,385.0" fill="url(#gB4)" filter="url(#fBar)"/><polygon points="616.4,328.0 967.4,328.0 987.0,385.0" fill="#fff" fill-opacity="0.17"/></g><text transform="translate(740.7,590.5) scale(1.14,1)" textLength="115.4" lengthAdjust="spacing" class="st">SUBTITEL 4</text><text transform="translate(586,599) scale(0.52,1)" class="nm" text-anchor="middle">4</text></svg>
<div class="a" style="left:0;top:706px;width:1366px;height:22px;background:#F1F1F1"></div>
<div class="a" style="left:0;top:706px;width:1366px;height:1px;background:#C6C6C6"></div>
<span class="t" style="left:8.5px;top:711.1px;font-size:11.5px;color:#444;letter-spacing:-0.17px;">Slide 1 of 1</span>
<span class="t" style="left:116.0px;top:711.1px;font-size:11.5px;color:#444;letter-spacing:-0.09px;">English (United States)</span>
<svg class="a" style="left:83px;top:708px" width="18" height="16" viewBox="83 708 18 16" fill="none" stroke="#555" stroke-width="1">
<path d="M84.500 710.500h5.500l1.500 1.500v9.500l-1.500-1.500h-5.500zM91.500 712l1.500-1.500h4.500v3M91.500 721.500l1.500-1.500h4.500v-1.500"/><path d="M93.500 716l1.800 2 3-4.500" stroke-width="1.200"/></svg>
<svg class="a" style="left:859px;top:708px" width="14" height="16" viewBox="859 708 14 16" fill="none" stroke="#666" stroke-width="1">
<path d="M861 716.500h11M861 719.500h11M861 722.500h7"/><path d="M863.500 714l3-3.500 3 3.500z" fill="#666" stroke="none"/></svg>
<span class="t" style="left:877.5px;top:711.6px;font-size:11.5px;color:#444;letter-spacing:-0.21px;">Notes</span>
<svg class="a" style="left:927px;top:709px" width="15" height="14" viewBox="927 709 15 14"><path d="M928 710.500h12.500v8h-6l-3 3v-3h-3.500z" fill="#6E6E6E"/></svg>
<span class="t" style="left:944.5px;top:711.6px;font-size:11.5px;color:#444;letter-spacing:-0.32px;">Comments</span>
<div class="a" style="left:1017px;top:707px;width:39px;height:21px;background:#C8C8C8"></div>
<svg class="a" style="left:1017px;top:706px" width="150" height="22" viewBox="1017 706 150 22" fill="none" stroke="#555" stroke-width="1">
<rect x="1029.500" y="710.500" width="13" height="12"/><path d="M1033.500 710.500v12M1033.500 719.500h9"/><rect x="1035.500" y="712.500" width="5" height="5"/>
<rect x="1067.500" y="710.500" width="5" height="4.500"/><rect x="1076" y="710.500" width="5" height="4.500"/><rect x="1067.500" y="718" width="5" height="4.500"/><rect x="1076" y="718" width="5" height="4.500"/>
<path d="M1111.500 712.500l-1.500-1.500h-5v10h5l1.500 1.500 1.500-1.500h5v-10h-5zM1111.500 712.500v10"/><path d="M1106.500 714.500h3M1106.500 716.500h3M1106.500 718.500h3M1113.500 714.500h3M1113.500 716.500h3M1113.500 718.500h3" stroke-width="0.800"/>
<path d="M1143 710.500h13.500M1144.500 711v6.500h10.500v-6.500M1149.500 717.500v4M1146.500 722.500h6.500"/><rect x="1146.500" y="712.500" width="6.500" height="3" fill="#555" stroke="none"/>
</svg>
<div class="a" style="left:1174px;top:716px;width:6px;height:2px;background:#444"></div>
<div class="a" style="left:1184px;top:716.500px;width:99px;height:1px;background:#9C9C9C"></div>
<div class="a" style="left:1234px;top:714.500px;width:1px;height:5px;background:#ABABAB"></div>
<div class="a" style="left:1216px;top:711px;width:4px;height:12px;background:#595959"></div>
<div class="a" style="left:1288px;top:716px;width:8px;height:2px;background:#444"></div><div class="a" style="left:1291px;top:713px;width:2px;height:8px;background:#444"></div>
<span class="t" style="left:1311.5px;top:711.1px;font-size:11.5px;color:#444;letter-spacing:-0.51px;">69%</span>
<svg class="a" style="left:1345px;top:709px" width="16" height="16" viewBox="1345 709 16 16" fill="none" stroke="#555" stroke-width="1">
<rect x="1347" y="710.500" width="12.500" height="12.500"/><path d="M1349.500 715v-2.500h2.500M1357 715v-2.500h-2.500M1349.500 718.500v2.500h2.500M1357 718.500v2.500h-2.500M1353.200 714.500v4.500M1351 716.800h4.500" stroke-width="0.900"/></svg>
<svg class="a" style="left:0;top:728px;overflow:hidden" width="1366" height="40" viewBox="0 728 1366 40">
<style>.bp{font-family:"Liberation Sans",sans-serif;font-weight:bold}</style>
<rect x="0" y="728" width="1366" height="40" fill="#C43D1C"/>
<path d="M104 728h96c8 12 8 28 0 40h-86z" fill="#CC4927"/><path d="M104 728h4l10 40h-4z" fill="#AE3416"/>
<text class="bp" transform="translate(29.500 786.500) rotate(-11) scale(0.8 1)" font-size="100" fill="#EDB3A3">P</text>
<circle cx="272.500" cy="744" r="23.800" fill="#D85836"/><path d="M272.500 744l18-16.500a23.800 23.800 0 0 1 5.800 16.500z" fill="#E66E4E"/>
<g transform="translate(265 753) rotate(-32)"><rect x="-12" y="-12" width="25" height="25" rx="2" fill="#BC3818"/><text class="bp" x="-6" y="6.500" font-size="16" fill="#F4C6B8">P</text></g>
<circle cx="412" cy="745" r="40" fill="#CB4826"/>
<g transform="translate(371 748) rotate(-17)"><rect x="-29" y="-31" width="63" height="62" rx="5" fill="#B23416"/><rect x="-31" y="-33" width="62" height="61" rx="5" fill="#C8421F"/><text class="bp" x="-14" y="16" font-size="45" fill="#F0AB9B">P</text></g>
<circle cx="925" cy="724" r="96" fill="#CD4A29"/><path d="M932.700 728L1021 728A96 96 0 0 1 1010.500 768L974.600 768z" fill="#E06A49"/>
<path d="M841 728l41 34.600 40-34.600z" fill="#BD4122"/><path d="M845.800 728l36.200 29 36-29z" fill="#A83216"/><path d="M854.600 728l26 21q2.200 1.600 4.400 0l30-21z" fill="#C03A1A"/>
<rect x="1060" y="728" width="62" height="40" fill="#C8421F"/>
<text class="bp" transform="translate(1080.500 759) rotate(5)" font-size="43" fill="#E98C74">P</text>
<path d="M1128 728h46.500a50 50 0 0 1 3.700 22l-52.200-3.500z" fill="#DA5E3C"/><path d="M1126 746.500l52.200 3.500a50 50 0 0 1-7.200 18h-46.500z" fill="#CD4A29"/>
<path d="M1215 768l30-40h70l12 7-20 33z" fill="#C8421F"/><path d="M1327 735l-20 33h-7l21-36z" fill="#B43616"/>
<path d="M1335 728h31v40h-55z" fill="#D95C3A"/>
<text class="bp" transform="translate(1238 759) rotate(30)" font-size="58" fill="#E58C72">P</text>
</svg>
<span class="t" style="left:519.5px;top:731.0px;font-size:35.2px;color:#fff;letter-spacing:1.45px;-webkit-text-stroke:0.6px #fff;">PowerPoint</span>
<span class="t" style="left:736.5px;top:737.1px;font-size:28px;color:#fff;letter-spacing:0.00px;font-weight:bold;font-family:'DejaVu Sans','Liberation Sans',sans-serif;letter-spacing:0.6px;transform:scaleX(1.13);transform-origin:0 0;-webkit-text-stroke:0.7px #fff;">LAB</span>
</div>
</body></html>
